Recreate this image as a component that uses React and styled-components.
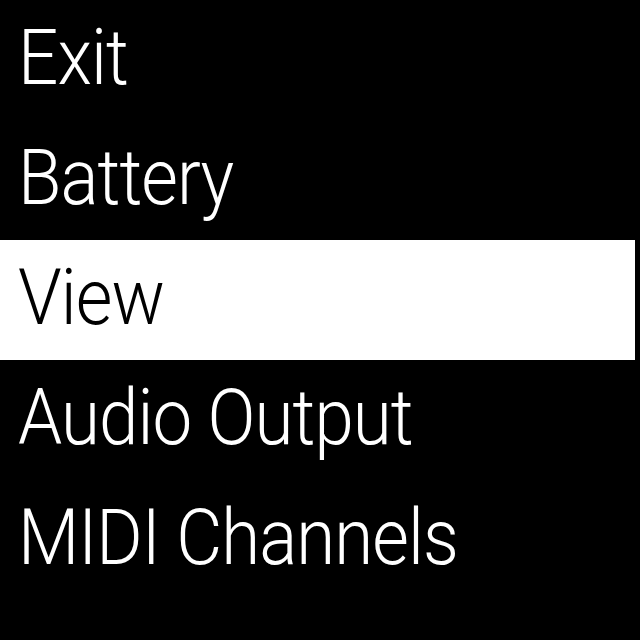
import React from "react";
import styled, { createGlobalStyle } from "styled-components";

const GlobalStyle = createGlobalStyle`
  html, body {
    margin: 0;
    padding: 0;
    background: #000;
  }
`;

const items = ["Exit", "Battery", "View", "Audio Output", "MIDI Channels"];

export default function App() {
  const selected = 2;

  return (
    <>
      <GlobalStyle />
      <Screen>
        <Menu>
          {items.map((label, i) => (
            <Row key={label} $active={i === selected}>
              <Label>{label}</Label>
            </Row>
          ))}
        </Menu>
      </Screen>
    </>
  );
}

const Screen = styled.div`
  width: 640px;
  height: 640px;
  background: #000;
  overflow: hidden;
`;

const Menu = styled.ul`
  list-style: none;
  margin: 0;
  padding: 0;
  display: flex;
  flex-direction: column;
`;

const Row = styled.li`
  height: 120px;
  margin-right: 5px;
  padding-left: 18px;
  box-sizing: border-box;
  background: ${(p) => (p.$active ? "#fff" : "#000")};
  color: ${(p) => (p.$active ? "#000" : "#fff")};
`;

const Label = styled.span`
  display: inline-block;
  font-family: Roboto, "Liberation Sans", sans-serif;
  font-weight: 300;
  font-size: 77px;
  line-height: 116px;
  letter-spacing: -1px;
  white-space: nowrap;
  transform: scaleX(0.92);
  transform-origin: left center;
`;
